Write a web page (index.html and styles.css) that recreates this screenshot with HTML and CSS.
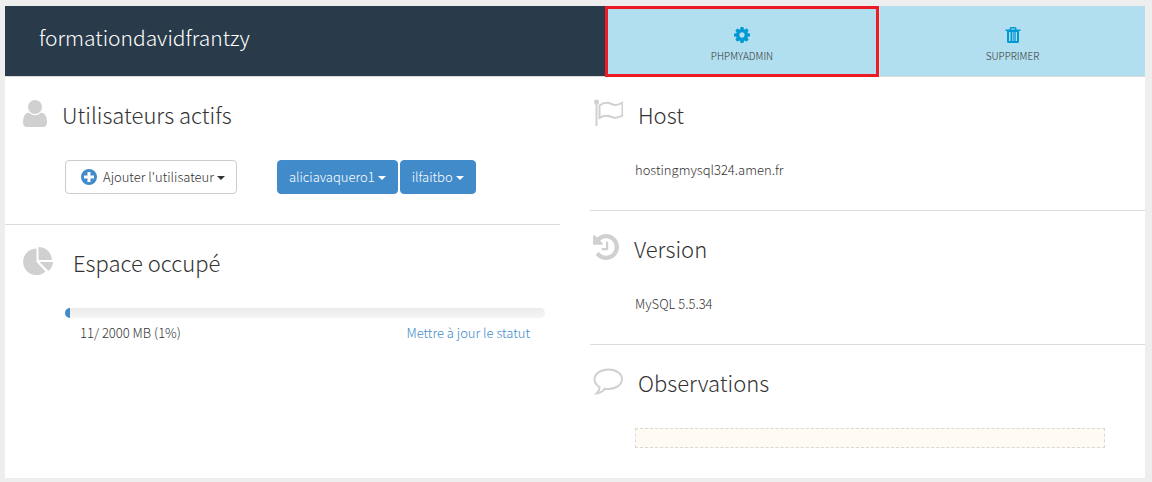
FILE: index.html
```html
<!DOCTYPE html>
<html lang="fr">
<head>
<meta charset="UTF-8" />
<meta name="viewport" content="width=device-width, initial-scale=1" />
<title>formationdavidfrantzy</title>
<link rel="stylesheet" href="styles.css">
</head>
<body>

<main class="panel">
  <!-- HEADER -->
  <header class="panel-header">
    <h1 class="panel-title">formationdavidfrantzy</h1>
    <a href="#phpmyadmin" class="action action-selected">
      <svg class="action-icon" viewBox="128 128 1536 1536" aria-hidden="true"><path d="M1152 896q0-106-75-181t-181-75-181 75-75 181 75 181 181 75 181-75 75-181zm512-109v222q0 12-8 23t-20 13l-185 28q-19 54-39 91 35 50 107 138 10 12 10 25t-9 23q-27 37-99 108t-94 71q-12 0-26-9l-138-108q-44 23-91 38-16 136-29 186-7 28-36 28h-222q-14 0-24.5-8.5t-11.5-21.5l-28-184q-49-16-90-37l-141 107q-10 9-25 9-14 0-25-11-126-114-165-168-7-10-7-23 0-12 8-23 15-21 51-66.5t54-70.5q-27-50-41-99l-183-27q-13-2-21-12.5t-8-23.5v-222q0-12 8-23t19-13l186-28q14-46 39-92-40-57-107-138-10-12-10-24 0-10 9-23 26-36 98.5-107.5t94.5-71.5q13 0 26 10l138 107q44-23 91-38 16-136 29-186 7-28 36-28h222q14 0 24.5 8.5t11.5 21.5l28 184q49 16 90 37l142-107q9-9 24-9 13 0 25 10 129 119 165 170 7 8 7 22 0 12-8 23-15 21-51 66.5t-54 70.5q26 50 41 98l183 28q13 2 21 12.5t8 23.5z"/></svg>
      <span>PHPMYADMIN</span>
    </a>
    <a href="#supprimer" class="action">
      <svg class="action-icon" viewBox="0 0 16 16" aria-hidden="true"><path fill-rule="evenodd" d="M4.500 2.500V1.500Q4.500 0 6 0h4q1.500 0 1.500 1.500v1h4V4H14v10.500q0 1.500-1.500 1.500h-9Q2 16 2 14.500V4H.5V2.500zM6 2.500h4v-1H6zM4 5v9h1.500V5zM7 5v9h.7V5zM8.700 5v9h.7V5zM10.700 5v9h1.300V5z"/></svg>
      <span>SUPPRIMER</span>
    </a>
  </header>

  <div class="columns">
    <!-- LEFT COLUMN -->
    <div class="column column-left">
      <section class="block">
        <div class="block-heading">
          <svg class="icon-user" viewBox="0 0 24 27" aria-hidden="true"><circle cx="12" cy="7" r="7"/><path d="M5.500 12.500Q12 18 18.500 12.500 24 13.500 24 22q0 5-4 5H4q-4 0-4-5 0-8.500 5.500-9.500z"/></svg>
          <h2>Utilisateurs actifs</h2>
        </div>
        <div class="block-body users">
          <button type="button" class="btn btn-default">
            <svg class="icon-plus" viewBox="0 0 16 16" aria-hidden="true"><path fill-rule="evenodd" d="M8 0a8 8 0 1 1 0 16A8 8 0 0 1 8 0zM6.500 3v3.500H3v3h3.500V13h3V9.500H13v-3H9.500V3z"/></svg>
            Ajouter l'utilisateur<span class="caret"></span>
          </button>
          <div class="user-list">
            <button type="button" class="btn btn-primary">aliciavaquero1<span class="caret"></span></button>
            <button type="button" class="btn btn-primary">ilfaitbo<span class="caret"></span></button>
          </div>
        </div>
      </section>

      <section class="block">
        <div class="block-heading heading-usage">
          <svg class="icon-wide" viewBox="0 0 30 28" aria-hidden="true"><path d="M13.500 1.500V15l9 9.500A13.300 13.300 0 1 1 13.500 1.500zM15.500 0A13.500 13.500 0 0 1 29 13H15.500zM16.500 15H30q0 5-4.500 9z"/></svg>
          <h2>Espace occupé</h2>
        </div>
        <div class="block-body usage">
          <div class="progress" role="progressbar" aria-label="Espace occupé" aria-valuenow="1" aria-valuemin="0" aria-valuemax="100">
            <div class="progress-bar" style="width: 1%"></div>
          </div>
          <div class="usage-info">
            <span>11/ 2000 MB (1%)</span>
            <a href="#statut">Mettre à jour le statut</a>
          </div>
        </div>
      </section>
    </div>

    <!-- RIGHT COLUMN -->
    <div class="column">
      <section class="block">
        <div class="block-heading">
          <svg class="icon-wide" viewBox="0 0 30 28" aria-hidden="true"><circle cx="3.500" cy="3" r="2.500"/><path d="M2.500 4h2v23h-2z"/><path class="stroke" d="M6.500 6.500q6-4.500 12-1.500 5 2.500 11-1.500v13q-6 3.500-11 1.500-6-3-12 1z"/></svg>
          <h2>Host</h2>
        </div>
        <p class="block-body">hostingmysql324.amen.fr</p>
      </section>

      <section class="block">
        <div class="block-heading">
          <svg class="icon-history" viewBox="128 128 1536 1536" aria-hidden="true"><path d="M1664 896q0 156-61 298t-164 245-245 164-298 61q-172 0-327-72.500t-264-204.500q-7-10-6.500-22.500t8.500-20.500l137-138q10-9 25-9 16 2 23 12 73 95 179 147t225 52q104 0 198.500-40.500t163.500-109.500 109.500-163.500 40.500-198.500-40.500-198.500-109.500-163.500-163.500-109.500-198.500-40.500q-98 0-188 35.500t-160 101.500l137 138q31 30 14 69-17 40-59 40h-448q-26 0-45-19t-19-45v-448q0-42 40-59 39-17 69 14l130 129q107-101 244.500-156.500t284.500-55.500q156 0 298 61t245 164 164 245 61 298zm-640-288v448q0 14-9 23t-23 9h-320q-14 0-23-9t-9-23v-64q0-14 9-23t23-9h224v-352q0-14 9-23t23-9h64q14 0 23 9t9 23z"/></svg>
          <h2>Version</h2>
        </div>
        <p class="block-body">MySQL 5.5.34</p>
      </section>

      <section class="block">
        <div class="block-heading">
          <svg class="icon-wide" viewBox="0 0 30 28" aria-hidden="true"><path class="stroke" d="M15.500 2.500c8 0 13.500 4.500 13.500 9.800s-6 9.700-13.500 9.700q-2 0-3.500-.3Q8 26.500 3.500 26.500q3-2.500 3-6.500Q1.500 17 1.500 12.300C1.500 7 7.500 2.500 15.500 2.500z"/></svg>
          <h2><label for="observations">Observations</label></h2>
        </div>
        <div class="block-body">
          <textarea id="observations" class="notes" rows="1"></textarea>
        </div>
      </section>
    </div>
  </div>
</main>

</body>
</html>
```
FILE: styles.css
```css
/* Reset */
*, *::before, *::after {
  box-sizing: border-box;
}
body, h1, h2, p {
  margin: 0;
}
a {
  text-decoration: none;
}

/* Variables */
:root {
  --navy: #293a4a;
  --sky: #b2dfef;
  --cyan: #0099d3;
  --blue: #428bca;
  --red: #ed1c24;
  --line: #dcdcdc;
  --icon: #d0d0d0;
  --text: #333;
}

body {
  padding: 6px 7px 4px 5px;
  background: #eee;
  color: var(--text);
  font-family: "Source Sans Pro", "Noto Sans CJK SC", sans-serif;
  font-size: 13px;
  font-weight: 300;
  line-height: 20px;
}

svg {
  display: block;
  flex: none;
  fill: var(--icon);
}
.stroke {
  fill: none;
  stroke: var(--icon);
  stroke-width: 2;
}

.panel {
  background: white;
}

/* Header */
.panel-header {
  display: grid;
  grid-template-columns: 300fr 137fr 133fr;
  border-bottom: 1px solid var(--line);
}
.panel-title {
  padding: 11px 34px 19px;
  background: var(--navy);
  color: white;
  font-size: 21px;
  font-weight: 300;
  line-height: 40px;
}
.action {
  display: flex;
  flex-direction: column;
  align-items: center;
  gap: 5px;
  padding: 21px 10px 0;
  border-left: 1px solid #cde9f3;
  background: var(--sky);
  color: var(--text);
  font-size: 10px;
  line-height: 16px;
}
.action-selected {
  margin-bottom: -1px;
  padding-top: 18px;
  border: 3px solid var(--red);
}
.action-icon {
  width: 16px;
  height: 16px;
  fill: var(--cyan);
}

/* Columns */
.columns {
  display: grid;
  grid-template-columns: 1fr 1fr;
  gap: 30px;
}
.column-left {
  --indent: 15px;
}
.block {
  padding: 17px 40px 30px 3px;
  padding-left: calc(3px + var(--indent, 0px));
}
.block + .block {
  border-top: 1px solid var(--line);
}
.block-heading {
  display: flex;
  align-items: center;
  gap: 15px;
  margin-bottom: 26px;
}
.heading-usage {
  gap: 20px;
}
.block-heading h2 {
  font-size: 22px;
  font-weight: 300;
  line-height: 40px;
}
.block-heading svg {
  margin-bottom: 2px;
}
.icon-user {
  width: 24px;
  height: 27px;
}
.icon-wide {
  width: 30px;
  height: 28px;
}
.icon-history {
  width: 26px;
  height: 26px;
}
.block-body {
  margin-left: 42px;
}

/* Buttons */
.users {
  display: flex;
  gap: 40px;
}
.user-list {
  display: flex;
  gap: 2px;
}
.btn {
  display: flex;
  align-items: center;
  padding: 6px 11px;
  border: 1px solid var(--blue);
  border-radius: 4px;
  font: inherit;
  cursor: pointer;
}
.btn-default {
  border-color: #ccc;
  background: white;
  color: var(--text);
}
.btn-primary {
  background: var(--blue);
  color: white;
}
.icon-plus {
  width: 16px;
  height: 16px;
  margin: 0 6px 0 4px;
  fill: var(--blue);
}
.caret {
  margin: 2px 0 0 3px;
  border-top: 4px solid;
  border-right: 4px solid transparent;
  border-left: 4px solid transparent;
}

/* Disk usage */
.usage {
  margin-right: -25px;
}
.progress {
  height: 10px;
  border-radius: 5px;
  background: linear-gradient(#ebebeb, #f5f5f5);
  overflow: hidden;
}
.progress-bar {
  height: 100%;
  background: var(--blue);
}
.usage-info {
  display: flex;
  justify-content: space-between;
  padding: 5px 15px;
}
.usage-info a {
  color: var(--blue);
}

/* Observations */
.notes {
  display: block;
  width: 100%;
  height: 20px;
  padding: 0 4px;
  border: 1px dashed #d8d8d8;
  background: #fffaf2;
  font: inherit;
  resize: none;
  overflow: hidden;
}
```
